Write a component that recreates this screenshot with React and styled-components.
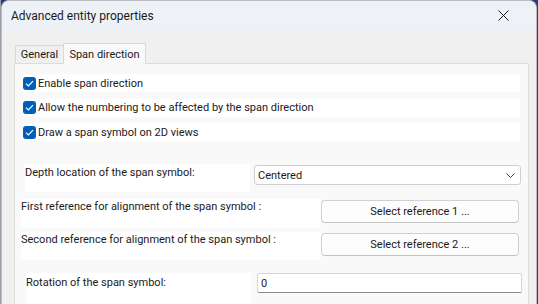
import React from "react";
import styled, { createGlobalStyle } from "styled-components";

const Global = createGlobalStyle`
  html, body { margin: 0; padding: 0; }
  body {
    width: 538px;
    height: 304px;
    overflow: hidden;
    background: #8c96a3;
    font-family: Roboto, "Noto Sans", sans-serif;
  }
`;

const Page = styled.div`
  display: flex;
  height: 304px;
  padding-left: 1px;
  background: linear-gradient(to right, #9aa0a8 0 1px, transparent 1px), #2a3a7a;
`;

const Window = styled.div`
  width: 534px;
  height: 310px;
  background: #f0f0f0;
  border: 1px solid #b9bcc2;
  border-bottom: none;
  border-radius: 8px 8px 0 0;
  overflow: hidden;
  display: flex;
  flex-direction: column;
`;

const TitleBar = styled.div`
  height: 30px;
  flex: none;
  background: #eef2f7;
  display: flex;
  align-items: center;
  justify-content: space-between;
  padding: 0 27px 0 9px;
`;

const Title = styled.span`
  font-size: 12px;
  color: #1a1a1a;
  padding-bottom: 1px;
`;

const CloseIcon = styled.svg`
  width: 11px;
  height: 11px;
  display: block;
  margin-bottom: 1px;
`;

const Body = styled.div`
  padding: 12px 7px 0 12px;
  flex: 1;
`;

const TabStrip = styled.div`
  display: flex;
  align-items: flex-end;
  height: 20px;
  padding-left: 1px;
`;

const Tab = styled.div`
  box-sizing: border-box;
  height: ${(p) => (p.$active ? "21px" : "18px")};
  width: ${(p) => p.$w}px;
  background: ${(p) => (p.$active ? "#f9f9f9" : "#f0f0f0")};
  border: 1px solid #d9d9d9;
  border-bottom: none;
  ${(p) => (p.$active ? "margin-bottom: -1px; z-index: 1;" : "border-right: none;")}
  font-size: 11px;
  color: #1a1a1a;
  display: flex;
  align-items: center;
  justify-content: center;
  position: relative;
`;

const Panel = styled.div`
  height: 260px;
  background: #f9f9f9;
  border: 1px solid #dcdcdc;
  border-bottom: none;
  padding-top: 10px;
  box-sizing: border-box;
`;

const CheckList = styled.div`
  display: flex;
  flex-direction: column;
  gap: 6.5px;
  padding: 0 8px;
`;

const CheckRow = styled.label`
  height: 18px;
  background: #ffffff;
  display: flex;
  align-items: center;
  gap: 2px;
  font-size: 11px;
  color: #1a1a1a;
`;

const Box = styled.span`
  width: 13px;
  height: 13px;
  border-radius: 3px;
  background: #005fb8;
  display: flex;
  align-items: center;
  justify-content: center;
  flex: none;
`;

const FormRow = styled.div`
  display: flex;
  align-items: flex-start;
  margin-top: ${(p) => p.$top}px;
  margin-left: ${(p) => p.$indent}px;
  height: ${(p) => p.$h}px;
`;

const Label = styled.div`
  width: ${(p) => p.$w}px;
  height: 100%;
  background: #ffffff;
  font-size: 11px;
  color: #1a1a1a;
  padding-top: ${(p) => p.$pt || 1}px;
  box-sizing: border-box;
  flex: none;
  white-space: nowrap;
`;

const Combo = styled.div`
  margin-left: ${(p) => p.$gap}px;
  margin-top: 1px;
  width: ${(p) => p.$w}px;
  height: 20px;
  box-sizing: border-box;
  background: #fff;
  border: 1px solid #cfcfcf;
  border-radius: 3px;
  display: flex;
  align-items: center;
  justify-content: space-between;
  padding: 0 5px 0 3px;
  font-size: 11px;
  color: #1a1a1a;
`;

const Button = styled.button`
  margin-top: 1px;
  width: ${(p) => p.$w}px;
  height: 23px;
  box-sizing: border-box;
  background: #fdfdfd;
  border: 1px solid #d0d0d0;
  border-bottom-color: #c2c2c2;
  border-radius: 4px;
  font-family: inherit;
  font-size: 11px;
  color: #1a1a1a;
  padding: 0;
`;

const Input = styled.div`
  margin-left: ${(p) => p.$gap}px;
  width: ${(p) => p.$w}px;
  height: 20px;
  box-sizing: border-box;
  background: #fff;
  border: 1px solid #d6d6d6;
  border-bottom-color: #8a8a8a;
  border-radius: 2px;
  font-size: 11px;
  color: #1a1a1a;
  display: flex;
  align-items: center;
  padding-left: 3px;
`;

const Check = () => (
  <svg width="9" height="7" viewBox="0 0 9 7">
    <path d="M1 3.6 L3.4 6 L8 1.2" fill="none" stroke="#fff" strokeWidth="1.2" />
  </svg>
);

const checks = [
  "Enable span direction",
  "Allow the numbering to be affected by the span direction",
  "Draw a span symbol on 2D views",
];

export default function App() {
  return (
    <>
      <Global />
      <Page>
        <Window>
          <TitleBar>
            <Title>Advanced entity properties</Title>
            <CloseIcon viewBox="0 0 11 11">
              <path d="M0.5 0.5 L10.5 10.5 M10.5 0.5 L0.5 10.5" stroke="#1a1a1a" strokeWidth="1" />
            </CloseIcon>
          </TitleBar>
          <Body>
            <TabStrip>
              <Tab $w={48}>General</Tab>
              <Tab $active $w={83}>Span direction</Tab>
            </TabStrip>
            <Panel>
              <CheckList>
                {checks.map((c) => (
                  <CheckRow key={c}>
                    <Box>
                      <Check />
                    </Box>
                    {c}
                  </CheckRow>
                ))}
              </CheckList>
              <FormRow $top={23} $indent={10} $h={28}>
                <Label $w={225} $pt={2}>Depth location of the span symbol:</Label>
                <Combo $gap={4} $w={267}>
                  <span>Centered</span>
                  <svg width="9" height="5" viewBox="0 0 9 5">
                    <path d="M0.5 0.5 L4.5 4.5 L8.5 0.5" fill="none" stroke="#444" strokeWidth="1" />
                  </svg>
                </Combo>
              </FormRow>
              <FormRow $top={7} $indent={6} $h={29}>
                <Label $w={300}>First reference for alignment of the span symbol :</Label>
                <Button $w={198}>Select reference 1 ...</Button>
              </FormRow>
              <FormRow $top={4} $indent={6} $h={28}>
                <Label $w={300}>Second reference for alignment of the span symbol :</Label>
                <Button $w={198}>Select reference 2 ...</Button>
              </FormRow>
              <FormRow $top={13} $indent={11} $h={40}>
                <Label $w={225} $pt={3}>Rotation of the span symbol:</Label>
                <Input $gap={6} $w={265}>0</Input>
              </FormRow>
            </Panel>
          </Body>
        </Window>
      </Page>
    </>
  );
}
